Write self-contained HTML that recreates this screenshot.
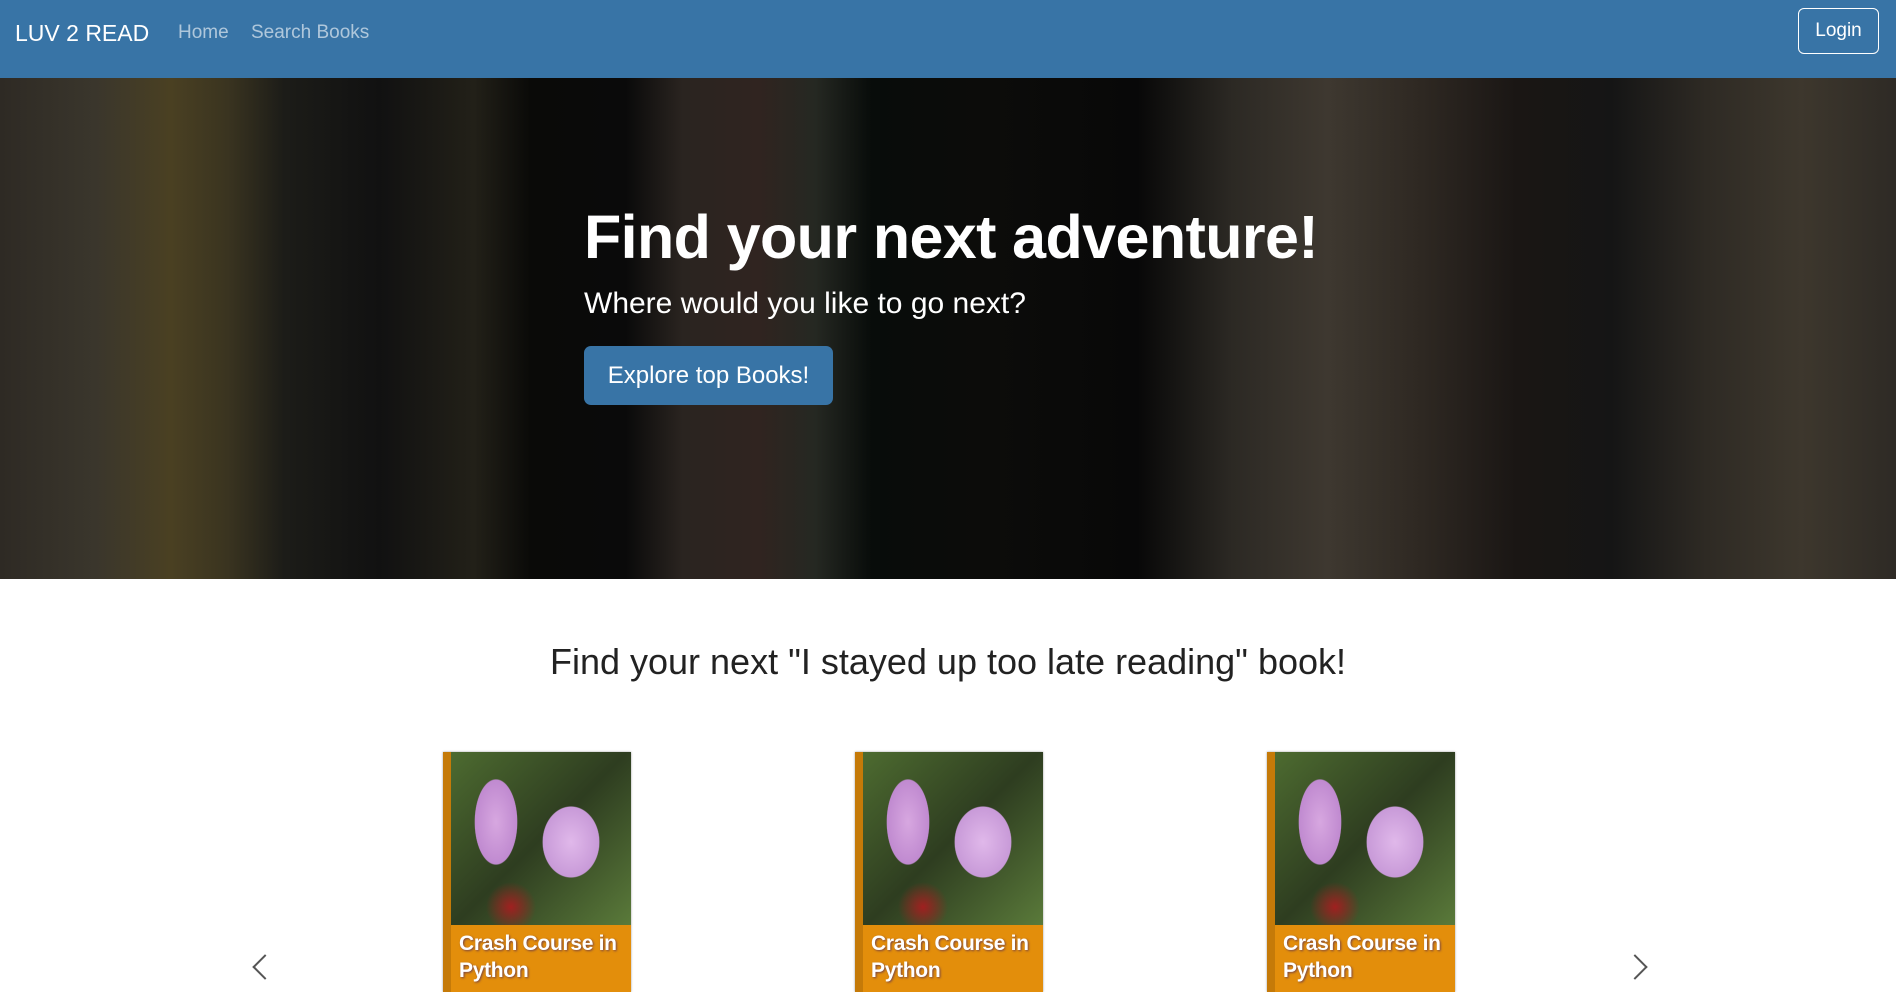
<!DOCTYPE html>
<html><head><meta charset="utf-8"><style>
*{box-sizing:border-box;margin:0;padding:0}
body{width:1896px;height:981px;overflow:hidden;background:#fff;font-family:"Liberation Sans",sans-serif;position:relative}
.nav{position:absolute;left:0;top:0;width:1896px;height:78px;background:#3874a6}
.brand{position:absolute;left:15px;top:20px;color:#fff;font-size:23px}
.link{position:absolute;top:22px;color:rgba(255,255,255,.6);font-size:19px}
.login{position:absolute;left:1798px;top:8px;width:81px;height:46px;border:1px solid #fff;border-radius:6px;color:#fff;font-size:19px;text-align:center;line-height:44px}
.hero{position:absolute;left:0;top:78px;width:1896px;height:501px;background:linear-gradient(90deg,#2e2a24 0%,#3a362c 5%,#4a4022 9%,#3a3420 12%,#1c1c18 15%,#111 20%,#222018 25%,#0a0a08 28%,#0a0a0a 33%,#2a2420 36%,#302420 40%,#252822 43%,#080c0a 46%,#0c0c0a 52%,#080808 60%,#2c2924 65%,#3e3830 70%,#2e2822 75%,#1a1614 80%,#151515 85%,#2e2a24 90%,#3d372d 95%,#2e2a25 100%)}
h1{position:absolute;left:584px;top:202px;color:#fff;font-size:61px;font-weight:bold;letter-spacing:-0.6px}
.sub{position:absolute;left:584px;top:287px;color:#fff;font-size:30px}
.btn{position:absolute;left:584px;top:346px;width:249px;height:59px;background:#3874a6;border-radius:7px;color:#fff;font-size:24px;text-align:center;line-height:59px}
h2{position:absolute;left:0;width:1896px;top:641px;text-align:center;font-size:36px;font-weight:normal;color:#222}
.book{position:absolute;top:752px;width:188px;height:240px;background:#e38e0b;border-left:8px solid #c57a08;box-shadow:0 0 2px #999}
.pic{position:absolute;left:0;top:0;width:180px;height:173px;background:radial-gradient(ellipse 30px 60px at 45px 70px,#d7a7e0 0,#c08ad0 70%,transparent 72%),radial-gradient(ellipse 40px 50px at 120px 90px,#e0b8ea 0,#c89ad8 70%,transparent 72%),radial-gradient(circle at 60px 155px,#a02020 0,transparent 25px),linear-gradient(135deg,#4d6b30,#2e3d20 50%,#5a7a3a)}
.bt{position:absolute;left:8px;top:178px;color:#fff;font-weight:bold;font-size:21px;line-height:27px;white-space:nowrap;letter-spacing:-0.3px;text-shadow:1px 1px 2px #744}
.arr{position:absolute;top:958px;width:18px;height:18px;border-left:2px solid #555;border-bottom:2px solid #555}
</style></head><body>
<div class="nav"><div class="brand">LUV 2 READ</div><div class="link" style="left:178px">Home</div><div class="link" style="left:251px">Search Books</div><div class="login">Login</div></div>
<div class="hero"></div>
<h1>Find your next adventure!</h1>
<div class="sub">Where would you like to go next?</div>
<div class="btn">Explore top Books!</div>
<h2>Find your next "I stayed up too late reading" book!</h2>
<div class="book" style="left:443px"><div class="pic"></div><div class="bt">Crash Course in<br>Python</div></div>
<div class="book" style="left:855px"><div class="pic"></div><div class="bt">Crash Course in<br>Python</div></div>
<div class="book" style="left:1267px"><div class="pic"></div><div class="bt">Crash Course in<br>Python</div></div>
<div class="arr" style="left:256px;transform:rotate(45deg)"></div>
<div class="arr" style="left:1626px;transform:rotate(-135deg)"></div>
</body></html>
